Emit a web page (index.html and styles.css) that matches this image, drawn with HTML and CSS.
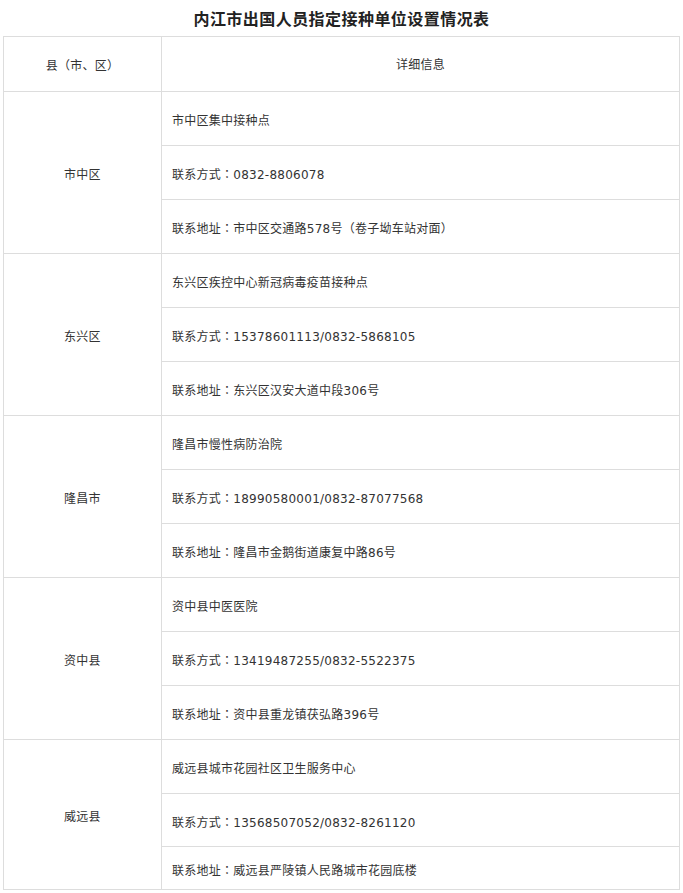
FILE: index.html
```html
<!DOCTYPE html>
<html lang="zh-CN">
<head>
<meta charset="utf-8">
<title>内江市出国人员指定接种单位设置情况表</title>
<link rel="stylesheet" href="styles.css">
</head>
<body>
<div class="page">
  <h1 class="title">内江市出国人员指定接种单位设置情况表</h1>
  <table class="info">
    <colgroup><col class="c-county"><col class="c-detail"></colgroup>
    <thead>
      <tr class="head"><th>县<span class="p" lang="zh-TW">（</span>市、区<span class="p" lang="zh-TW">）</span></th><th>详细信息</th></tr>
    </thead>
    <tbody>
      <tr><td class="county" rowspan="3">市中区</td><td class="detail">市中区集中接种点</td></tr>
      <tr><td class="detail">联系方式<span class="p" lang="zh-TW">：</span>0832-8806078</td></tr>
      <tr><td class="detail">联系地址<span class="p" lang="zh-TW">：</span>市中区交通路578号<span class="p" lang="zh-TW">（</span>卷子坳车站对面<span class="p" lang="zh-TW">）</span></td></tr>

      <tr><td class="county" rowspan="3">东兴区</td><td class="detail">东兴区疾控中心新冠病毒疫苗接种点</td></tr>
      <tr><td class="detail">联系方式<span class="p" lang="zh-TW">：</span>15378601113/0832-5868105</td></tr>
      <tr><td class="detail">联系地址<span class="p" lang="zh-TW">：</span>东兴区汉安大道中段306号</td></tr>

      <tr><td class="county" rowspan="3">隆昌市</td><td class="detail">隆昌市慢性病防治院</td></tr>
      <tr><td class="detail">联系方式<span class="p" lang="zh-TW">：</span>18990580001/0832-87077568</td></tr>
      <tr><td class="detail">联系地址<span class="p" lang="zh-TW">：</span>隆昌市金鹅街道康复中路86号</td></tr>

      <tr><td class="county" rowspan="3">资中县</td><td class="detail">资中县中医医院</td></tr>
      <tr><td class="detail">联系方式<span class="p" lang="zh-TW">：</span>13419487255/0832-5522375</td></tr>
      <tr><td class="detail">联系地址<span class="p" lang="zh-TW">：</span>资中县重龙镇茯弘路396号</td></tr>

      <tr><td class="county" rowspan="3">威远县</td><td class="detail">威远县城市花园社区卫生服务中心</td></tr>
      <tr class="r-mid"><td class="detail">联系方式<span class="p" lang="zh-TW">：</span>13568507052/0832-8261120</td></tr>
      <tr class="r-last"><td class="detail">联系地址<span class="p" lang="zh-TW">：</span>威远县严陵镇人民路城市花园底楼</td></tr>
    </tbody>
  </table>
</div>
</body>
</html>
```

FILE: styles.css
```css
html, body {
  margin: 0;
  padding: 0;
  background: #fff;
}
body {
  font-family: "DejaVu Sans", "Noto Sans CJK SC", sans-serif;
  color: #333;
}
.page {
  padding: 0 3px;
}
.title {
  margin: 0;
  height: 36px;
  line-height: 36px;
  font-family: "Noto Sans CJK SC", sans-serif;
  font-size: 16px;
  letter-spacing: 0.45px;
  font-weight: bold;
  text-align: center;
  color: #222;
}
.info {
  width: 677px;
  border-collapse: collapse;
  table-layout: fixed;
  font-size: 12px;
  letter-spacing: 0.25px;
  line-height: 18px;
}
.c-county { width: 158px; }
.info th, .info td {
  border: 1px solid #ddd;
  padding: 4px 0 0 0;
  font-weight: normal;
  color: #333;
}
.info th {
  text-align: center;
  height: 52px;
  padding-top: 2px;
}
.info td {
  height: 49px;
}
.p {
  font-family: "Noto Sans CJK TC", sans-serif;
}
.county {
  text-align: center;
}
.info .detail {
  text-align: left;
  padding-left: 10px;
}
.info .r-mid td { height: 48px; }
.info .r-last td { height: 38px; }
```
